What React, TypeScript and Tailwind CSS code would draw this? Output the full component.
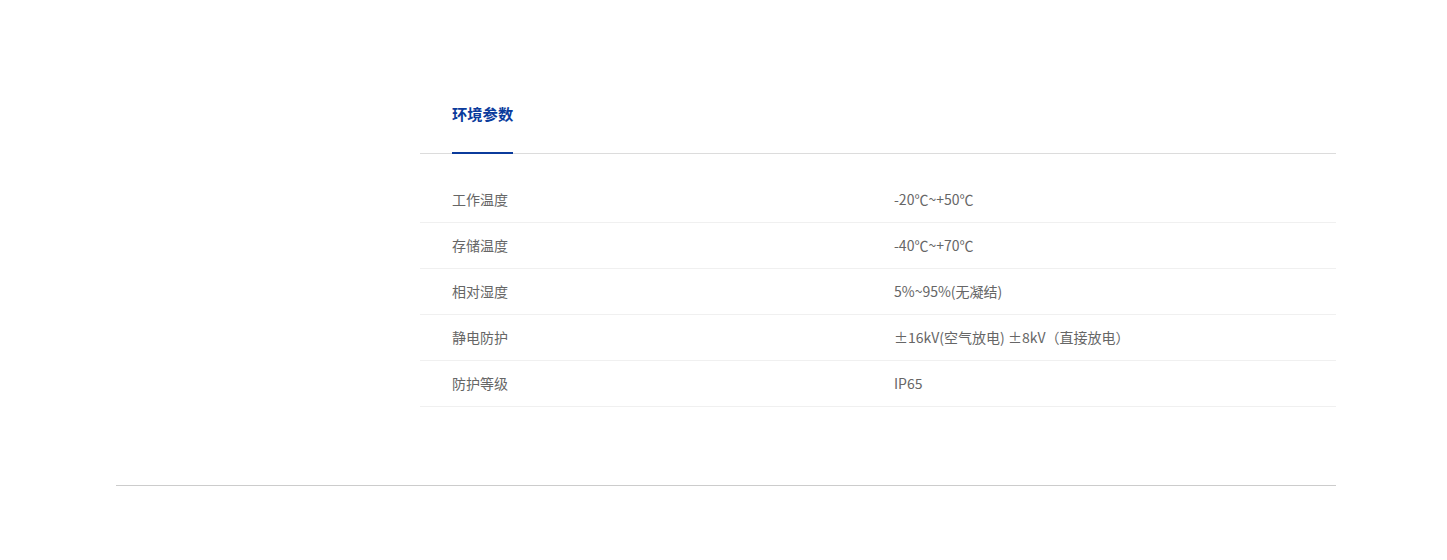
export default function App() {
  const rows = [
    ["工作温度", "-20℃~+50℃"],
    ["存储温度", "-40℃~+70℃"],
    ["相对湿度", "5%~95%(无凝结)"],
    ["静电防护", "±16kV(空气放电) ±8kV（直接放电）"],
    ["防护等级", "IP65"],
  ];
  return (
    <div className="w-[1447px] h-[560px] bg-white" style={{ fontFamily: '"Noto Sans CJK SC", "Noto Sans", sans-serif' }}>
      <div className="ml-[420px] w-[916px] pt-[100px]">
        <div className="border-b border-[#dcdcdc] pl-8 flex">
          <div className="text-[15.3px] font-bold text-[#0b3b9c] leading-[27px] pb-[25px] border-b-2 border-[#0b3b9c] -mb-px">环境参数</div>
        </div>
        <div className="mt-[23px]">
          {rows.map(([a, b]) => (
            <div key={a} className="flex h-[46px] items-center border-b border-[#f0f0f0] text-[14px] text-[#666]">
              <div className="w-[474px] pl-8">{a}</div>
              <div>{b}</div>
            </div>
          ))}
        </div>
      </div>
      <div className="ml-[116px] w-[1220px] mt-[78px] border-t border-[#cccccc]" />
    </div>
  );
}
